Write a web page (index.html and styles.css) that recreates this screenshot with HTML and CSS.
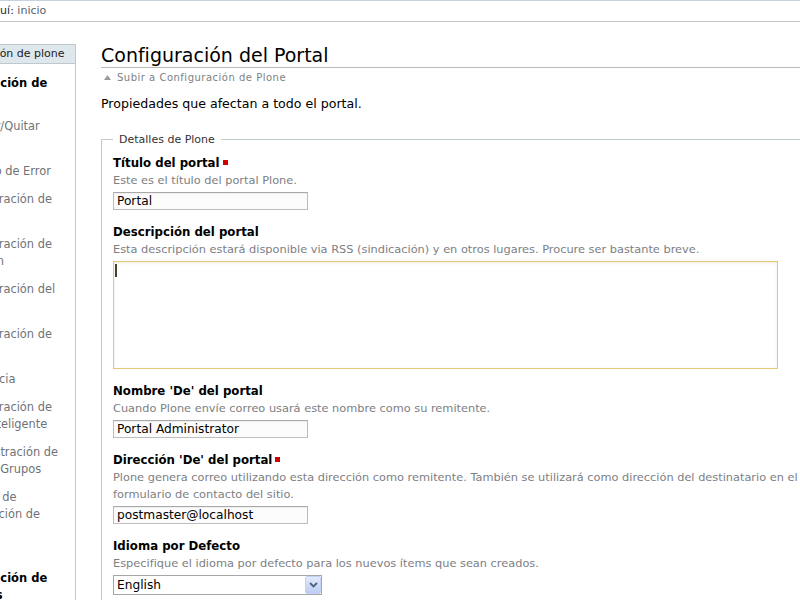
FILE: index.html
```html
<!DOCTYPE html>
<html lang="es">
<head>
    <meta charset="utf-8"/>
    <meta name="viewport" content="width=device-width, initial-scale=1"/>
    <link rel="stylesheet" href="styles.css">
</head>
<body>

    <div class="breadcrumbs">
        <span class="here">Usted está aquí:</span>
        <a href="#" class="crumb">inicio</a>
    </div>

    <div class="columns">

        <div class="portlet">
            <div class="portlet-header">Configuración de plone</div>
            <div class="portlet-body">
                <div class="nav-section">Configuración de Plone</div>
                <a href="#" class="nav-item">Agregar/Quitar Productos</a>
                <a href="#" class="nav-item">Registro de Error</a>
                <a href="#" class="nav-item">Configuración de Correo</a>
                <a href="#" class="nav-item">Configuración de Navegación</a>
                <a href="#" class="nav-item">Configuración del Portal</a>
                <a href="#" class="nav-item">Configuración de Skins</a>
                <a href="#" class="nav-item">Apariencia</a>
                <a href="#" class="nav-item">Configuración de Carpeta Inteligente</a>
                <a href="#" class="nav-item">Administración de Usuarios y Grupos</a>
                <a href="#" class="nav-item">Interfaz de Administración de Zope</a>
                <div class="nav-section last">Configuración de Productos</div>
            </div>
        </div>

        <div class="content">
            <h1>Configuración del Portal</h1>
            <a href="#" class="link-parent">
                <svg class="up-arrow" width="7" height="5" viewBox="0 0 7 5"><path d="M0 5 L3.5 0 L7 5 Z" fill="#9a9a9a"/></svg>Subir a Configuración de Plone
            </a>
            <p class="description">Propiedades que afectan a todo el portal.</p>

            <form>
                <fieldset>
                    <legend>Detalles de Plone</legend>

                    <div class="field">
                        <label>Título del portal<span class="required"></span></label>
                        <div class="help">Este es el título del portal Plone.</div>
                        <input type="text" class="text-input" value="Portal">
                    </div>

                    <div class="field">
                        <label>Descripción del portal</label>
                        <div class="help">Esta descripción estará disponible via RSS (sindicación) y en otros lugares. Procure ser bastante breve.</div>
                        <div class="textarea-wrap">
                            <textarea class="text-area"></textarea>
                            <span class="caret"></span>
                        </div>
                    </div>

                    <div class="field">
                        <label>Nombre 'De' del portal</label>
                        <div class="help">Cuando Plone envíe correo usará este nombre como su remitente.</div>
                        <input type="text" class="text-input" value="Portal Administrator">
                    </div>

                    <div class="field">
                        <label>Dirección 'De' del portal<span class="required"></span></label>
                        <div class="help">Plone genera correo utilizando esta dirección como remitente. También se utilizará como dirección del destinatario en el formulario de contacto del sitio.</div>
                        <input type="text" class="text-input" value="postmaster@localhost">
                    </div>

                    <div class="field">
                        <label>Idioma por Defecto</label>
                        <div class="help">Especifique el idioma por defecto para los nuevos ítems que sean creados.</div>
                        <div class="select-wrap">
                            <select class="select">
                                <option>English</option>
                                <option>Español</option>
                            </select>
                            <span class="select-button">
                                <svg width="9" height="6" viewBox="0 0 9 6"><path d="M1 1 L4.5 4.5 L8 1" fill="none" stroke="#4d6185" stroke-width="1.8"/></svg>
                            </span>
                        </div>
                    </div>

                </fieldset>
            </form>
        </div>

    </div>
</body>
</html>
```

FILE: styles.css
```css
/* pagina de configuracion, estilo plone clasico */

html {
    overflow: hidden;
}

body {
    margin: 0;
    background-color: #fff;
    color: #000;
    font-family: "DejaVu Sans", Verdana, sans-serif;
    font-size: 11px;
}

a {
    text-decoration: none;
}

.breadcrumbs {
    border-top: 1px solid #c5d4de;
    border-bottom: 1px solid #c8c8c8;
    line-height: 20px;
    white-space: nowrap;
    text-indent: -76px;
}

.here {
    color: #1f1f1f;
}

.crumb {
    color: #59636b;
}

.columns {
    display: flex;
    align-items: flex-start;
    margin-top: 21px;
}

/* portlet da esquerda, cortado pela janela */
.portlet {
    flex: none;
    width: 146px;
    margin-left: -70px;
    margin-top: 1px;
    border-right: 1px solid #bfc8cc;
    box-sizing: border-box;
}

.portlet-header {
    background-color: #dee7ec;
    border-top: 1px solid #bfc8cc;
    border-bottom: 1px solid #bfc8cc;
    line-height: 18px;
    padding-left: 7px;
    color: #222;
    white-space: nowrap;
}

.portlet-body {
    padding: 0 4px 40px 7px;
}

.nav-section {
    font-weight: bold;
    font-size: 11.5px;
    line-height: 17px;
    margin: 11px 0 4px;
}

.nav-section.last {
    margin-top: 24px;
}

.nav-item {
    display: block;
    padding: 5px 0 6px;
    text-indent: 18px;
    font-size: 11.4px;
    line-height: 17px;
    color: #6f7377;
}

.content {
    flex: none;
    width: 720px;
    margin-left: 25px;
}

h1 {
    margin: 0;
    font-size: 19px;
    font-weight: normal;
    line-height: 24px;
    border-bottom: 1px solid #b9b9b9;
}

.link-parent {
    display: block;
    margin-top: 3px;
    line-height: 14px;
    font-size: 10px;
    letter-spacing: 0.5px;
    color: #7d8084;
}

.up-arrow {
    margin: 0 6px 1px 3px;
}

.description {
    margin: 9.5px 0 0;
    font-size: 12.6px;
    line-height: 17px;
}

form {
    margin-top: 20px;
}

fieldset {
    margin: 0;
    padding: 7px 11px 20px;
    border: 1px solid #bfc8cc;
}

legend {
    padding: 0 6px;
    line-height: 16px;
    color: #333;
}

.field {
    margin-bottom: 14px;
}

label {
    display: block;
    font-weight: bold;
    font-size: 11.75px;
    line-height: 17px;
}

.required {
    display: inline-block;
    width: 5px;
    height: 5px;
    margin-left: 3px;
    vertical-align: 2px;
    background-color: #d40000;
}

.help {
    color: #7d8084;
    font-size: 11.35px;
    line-height: 17px;
}

.text-input {
    display: block;
    box-sizing: border-box;
    width: 195px;
    height: 18px;
    margin: 3px 0 0;
    padding: 0 3px;
    border: 1px solid #bdbdbd;
    border-top-color: #a9a9a9;
    background-color: #fcfcfc;
    box-shadow: inset 0 1px 1px rgba(0, 0, 0, 0.06);
    font-family: "DejaVu Sans", Verdana, sans-serif;
    font-size: 12.2px;
    color: #000;
}

.textarea-wrap {
    position: relative;
    margin-top: 3px;
    width: 665px;
}

.text-area {
    display: block;
    box-sizing: border-box;
    width: 665px;
    height: 108px;
    margin: 0;
    border: 1px solid #e3c676;
    background-color: #fff;
    box-shadow: inset 0 1px 3px rgba(160, 130, 40, 0.15);
    resize: none;
    outline: none;
}

.caret {
    position: absolute;
    left: 2px;
    top: 3px;
    width: 2px;
    height: 13px;
    background-color: #4a3f2c;
}

.select-wrap {
    position: relative;
    width: 209px;
    margin-top: 3px;
}

.select {
    display: block;
    box-sizing: border-box;
    width: 209px;
    height: 20px;
    margin: 0;
    padding: 0 3px;
    border: 1px solid #a6a6a6;
    background-color: #fff;
    appearance: none;
    -webkit-appearance: none;
    font-family: "DejaVu Sans", Verdana, sans-serif;
    font-size: 12.2px;
    color: #000;
}

.select-button {
    position: absolute;
    right: 1px;
    top: 1px;
    width: 16px;
    height: 18px;
    box-sizing: border-box;
    border: 1px solid #c3d3f7;
    border-radius: 2px;
    background: linear-gradient(#e2eafb, #bccdf2);
    display: flex;
    align-items: center;
    justify-content: center;
}
```
